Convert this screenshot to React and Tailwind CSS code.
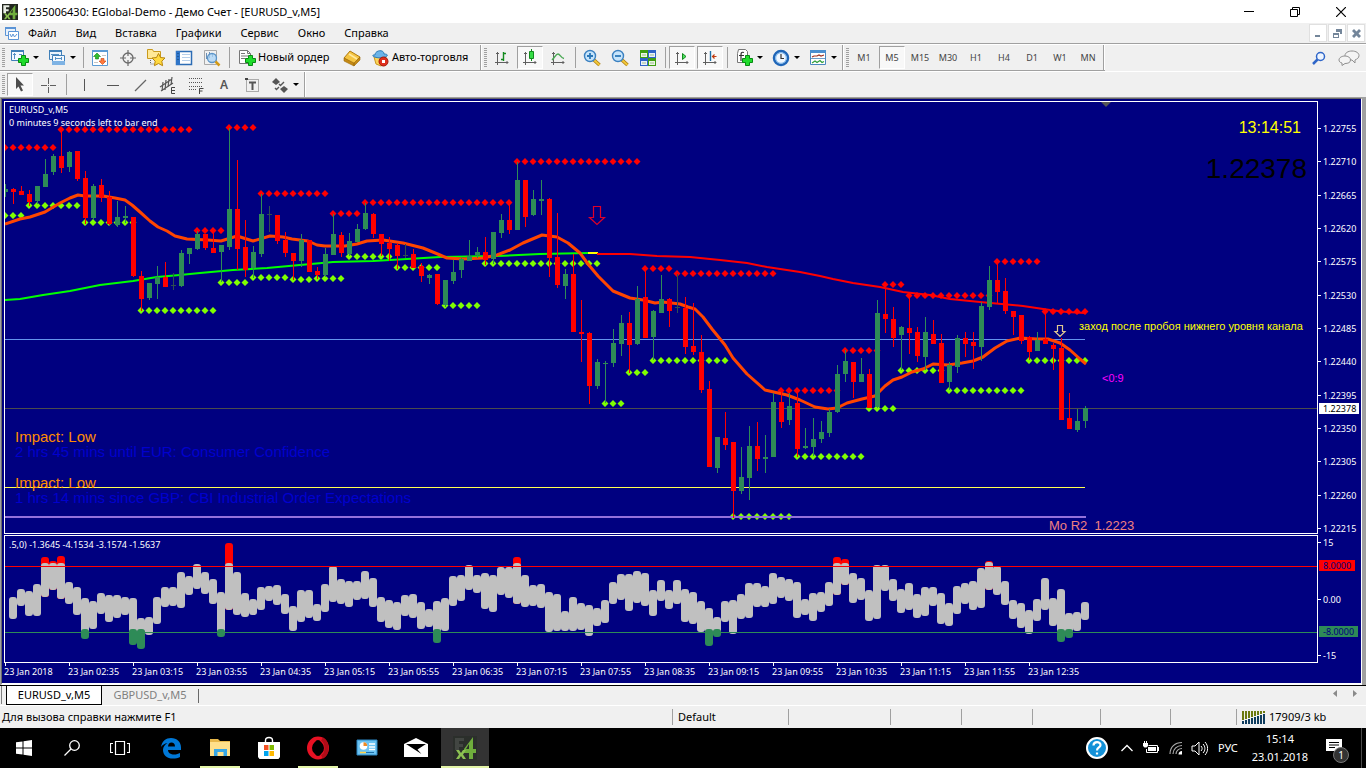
import clsx from 'clsx'

// first bar sits at x = 5, one bar every 8px
const barX = (i) => 5 + i * 8

// [direction, body top, body bottom, high, low]
const candles = [
  ['u', 189, 192, 184, 197], ['d', 189, 192, 188, 204], ['d', 191, 195, 186, 195], ['d', 194, 202, 190, 206],
  ['u', 186, 201, 186, 204], ['u', 174, 187, 159, 187], ['u', 156, 172, 154, 175], ['d', 156, 168, 130, 173],
  ['u', 152, 167, 151, 172], ['d', 151, 179, 151, 181], ['d', 178, 218, 171, 224], ['u', 186, 218, 184, 220],
  ['d', 185, 198, 179, 202], ['d', 197, 224, 191, 225], ['u', 217, 225, 201, 227], ['u', 216, 218, 206, 223],
  ['d', 217, 276, 217, 277], ['d', 276, 299, 271, 311], ['u', 283, 298, 283, 300], ['u', 277, 284, 266, 299],
  ['d', 277, 287, 262, 287], ['n', 285, 286, 273, 290], ['u', 253, 286, 250, 287], ['u', 248, 254, 248, 264],
  ['u', 234, 249, 231, 250], ['d', 234, 248, 234, 250], ['d', 248, 253, 232, 253], ['u', 245, 252, 245, 282],
  ['u', 209, 247, 128, 250], ['d', 209, 249, 160, 270], ['d', 247, 270, 220, 277], ['u', 252, 268, 246, 278],
  ['u', 214, 254, 194, 257], ['n', 214, 215, 206, 232], ['d', 215, 241, 215, 244], ['d', 240, 253, 232, 257],
  ['d', 253, 261, 253, 280], ['u', 240, 261, 234, 267], ['d', 240, 272, 240, 272], ['d', 271, 275, 267, 279],
  ['u', 254, 275, 248, 277], ['u', 234, 255, 214, 255], ['d', 235, 253, 232, 257], ['u', 241, 254, 233, 256],
  ['u', 229, 242, 224, 242], ['u', 213, 229, 203, 230], ['d', 214, 234, 213, 238], ['d', 234, 244, 234, 256],
  ['d', 243, 249, 237, 261], ['d', 245, 256, 243, 269], ['n', 255, 256, 244, 258], ['d', 254, 268, 249, 268],
  ['d', 266, 276, 263, 282], ['u', 275, 278, 274, 284], ['d', 274, 304, 274, 305], ['u', 280, 305, 280, 307],
  ['u', 272, 281, 260, 284], ['u', 259, 270, 258, 278], ['u', 256, 261, 240, 261], ['u', 252, 255, 247, 258],
  ['d', 252, 260, 237, 265], ['u', 232, 259, 232, 264], ['u', 220, 233, 214, 238], ['d', 220, 230, 203, 234],
  ['u', 180, 230, 162, 230], ['d', 180, 217, 180, 227], ['u', 199, 215, 190, 216], ['u', 199, 201, 180, 215],
  ['d', 199, 258, 198, 277], ['d', 257, 285, 213, 288], ['u', 274, 286, 269, 299], ['d', 274, 332, 254, 332],
  ['d', 332, 334, 300, 362], ['d', 333, 386, 332, 404], ['u', 362, 386, 359, 389], ['u', 363, 364, 361, 403],
  ['u', 343, 363, 329, 367], ['u', 323, 344, 315, 356], ['d', 323, 345, 312, 373], ['u', 299, 344, 286, 345],
  ['d', 297, 338, 270, 338], ['u', 311, 337, 310, 360], ['u', 299, 313, 275, 313], ['d', 299, 311, 298, 327],
  ['n', 307, 308, 274, 313], ['d', 308, 347, 297, 354], ['d', 346, 352, 303, 355], ['d', 352, 390, 335, 393],
  ['d', 389, 467, 381, 467], ['u', 437, 468, 437, 473], ['d', 438, 445, 412, 450], ['d', 442, 491, 442, 518],
  ['u', 477, 491, 447, 494], ['u', 446, 478, 426, 500], ['d', 446, 459, 422, 471], ['u', 457, 459, 435, 473],
  ['u', 402, 457, 393, 457], ['d', 402, 422, 390, 428], ['u', 406, 420, 393, 425], ['d', 403, 449, 393, 457],
  ['u', 446, 448, 428, 449], ['u', 439, 447, 418, 456], ['u', 432, 439, 421, 443], ['u', 412, 433, 409, 437],
  ['u', 374, 412, 365, 413], ['u', 361, 374, 350, 382], ['d', 362, 382, 362, 398], ['u', 374, 382, 358, 382],
  ['d', 374, 408, 369, 408], ['u', 313, 407, 300, 408], ['d', 314, 319, 288, 333], ['d', 319, 338, 307, 347],
  ['u', 327, 335, 326, 370], ['d', 328, 333, 295, 354], ['d', 332, 356, 327, 362], ['u', 332, 357, 317, 370],
  ['d', 334, 344, 320, 344], ['d', 343, 383, 334, 383], ['u', 365, 382, 362, 390], ['u', 338, 367, 335, 373],
  ['d', 338, 344, 332, 357], ['d', 342, 346, 332, 369], ['u', 306, 347, 302, 361], ['u', 280, 307, 266, 310],
  ['d', 280, 292, 262, 303], ['d', 291, 311, 278, 314], ['d', 311, 317, 311, 335], ['d', 315, 341, 315, 344],
  ['d', 337, 352, 336, 360], ['u', 340, 351, 332, 351], ['d', 339, 344, 312, 344], ['d', 345, 349, 343, 370],
  ['d', 348, 420, 338, 420], ['d', 418, 429, 393, 429], ['u', 421, 430, 409, 432], ['u', 408, 421, 406, 428],
]

// [y, first bar, last bar]
const resistance = [
  [147, 0, 6], [129, 7, 23], [230, 24, 27], [127, 28, 31], [193, 32, 40], [213, 41, 44], [202, 45, 63], [161, 64, 79],
  [268, 80, 83], [273, 84, 96], [390, 97, 104], [350, 105, 109], [284, 110, 112], [295, 113, 123], [261, 124, 129],
  [311, 130, 135],
]
const support = [
  [215, 0, 2], [205, 3, 9], [222, 10, 16], [310, 17, 26], [282, 27, 30], [277, 31, 35], [279, 36, 38], [278, 39, 42],
  [256, 43, 48], [267, 49, 54], [305, 55, 59], [263, 60, 74], [403, 75, 77], [372, 78, 80], [360, 81, 90],
  [516, 91, 98], [456, 99, 107], [408, 108, 111], [370, 112, 117], [390, 118, 127], [360, 128, 135],
]

const fastMa =
  '5,224 20,219 30,217 45,212 60,203 70,198 78,195 85,196 103,196 115,198 125,200 132,205 140,212 150,221 158,227 167,231 175,236 187,239 208,240 221,241 237,236 253,241 270,236 283,237 292,239 308,241 317,245 325,246 345,246 357,244 367,241 383,240 403,243 423,248 440,255 447,258 463,259 483,258 497,255 510,250 523,243 542,235 557,237 568,243 580,253 588,264 598,276 613,291 630,298 643,300 655,303 663,302 680,304 688,307 695,309 703,317 712,329 725,345 733,358 747,374 765,390 787,395 800,400 815,407 828,409 837,408 847,403 862,399 875,396 885,386 893,380 902,377 912,372 923,369 933,364 948,365 962,363 973,361 983,357 995,348 1007,341 1020,338 1037,339 1048,339 1060,343 1070,350 1080,359 1086,364'
const slowUp =
  '5,300 20,299 43,295 70,291 80,289 100,285 133,281 157,277 180,275 200,273 233,270 267,268 300,265 333,262 373,261 407,259 440,257 497,256 540,254 588,253'
const slowDown =
  '597,254 630,254 657,256 690,257 720,260 747,263 767,267 800,272 820,276 833,279 853,283 880,287 903,292 930,295 950,299 980,302 1023,306 1050,310 1067,312 1085,313'

// oscillator ranges per bar, three steps to a pixel: [top, bottom, peak when outside the levels]
const osc = [
  [201, 266], [177, 227], [183, 257], [163, 257], [99, 202, 81], [99, 181, 93], [99, 208, 77], [155, 223], [171, 256],
  [204, 308, 326], [214, 297], [189, 253], [195, 275], [195, 263], [201, 256], [204, 308, 345], [263, 308, 356],
  [261, 314], [201, 281], [171, 232], [171, 229], [126, 235], [137, 196], [102, 176], [126, 193], [147, 223],
  [186, 308, 320], [99, 239, 39], [126, 256], [189, 260], [207, 256], [171, 241], [168, 214], [166, 226], [192, 253],
  [228, 302], [180, 275], [180, 265], [222, 272], [163, 247], [109, 217], [147, 221], [153, 230], [153, 211],
  [123, 206], [144, 230], [201, 277], [210, 293], [216, 299], [196, 259], [192, 265], [216, 296], [238, 290],
  [213, 308, 339], [205, 302], [138, 227], [135, 212], [105, 180], [135, 188], [129, 236], [135, 246], [111, 194],
  [111, 203], [99, 221, 81], [135, 230], [165, 227], [161, 234], [186, 306], [192, 302], [243, 302], [201, 302],
  [219, 299], [225, 318], [234, 287], [210, 278], [156, 223], [132, 209], [132, 242], [123, 218], [129, 227],
  [180, 257], [150, 212], [180, 236], [150, 223], [177, 277], [186, 281], [213, 306], [234, 308, 348],
  [261, 308, 320], [213, 275], [210, 311], [192, 266], [159, 263], [159, 232], [168, 230], [129, 223], [141, 203],
  [147, 212], [156, 263], [207, 256], [189, 272], [186, 245], [156, 227], [99, 196, 81], [99, 164, 87], [129, 218],
  [144, 209], [180, 272], [105, 266], [105, 182], [147, 212], [177, 248], [159, 239], [192, 263], [171, 257],
  [171, 227], [189, 281], [219, 287], [168, 251], [159, 223], [153, 239], [114, 233], [97, 180, 93], [109, 194],
  [153, 224], [210, 266], [219, 293], [240, 311], [207, 272], [144, 239], [204, 287], [177, 308, 335],
  [249, 308, 323], [246, 302], [215, 270],
]
const oscY = (v) => 530 + Math.round(v / 3)

const prices = [
  '1.22755', '1.22710', '1.22665', '1.22620', '1.22575', '1.22530', '1.22485', '1.22440', '1.22395', '1.22350',
  '1.22305', '1.22260', '1.22215',
]
const times = [
  '2018', '02:35', '03:15', '03:55', '04:35', '05:15', '05:55', '06:35', '07:15', '07:55', '08:35', '09:15', '09:55',
  '10:35', '11:15', '11:55', '12:35',
]
const menus = ['Файл', 'Вид', 'Вставка', 'Графики', 'Сервис', 'Окно', 'Справка']
const frames = ['M1', 'M5', 'M15', 'M30', 'H1', 'H4', 'D1', 'W1', 'MN']

/* ---------- icons ---------- */

function Svg({ size = 18, children, className }) {
  return (
    <svg width={size} height={size} viewBox={`0 0 ${size} ${size}`} fill="none" className={clsx('shrink-0', className)}>
      {children}
    </svg>
  )
}

const Plus = ({ x = 7, y = 6 }) => (
  <path
    transform={`translate(${x} ${y})`}
    d="M3.500.5h4v3h3v4h-3v3h-4v-3h-3v-4h3z"
    fill="#1fdc2b"
    stroke="#078a12"
  />
)

const Mt4Logo = ({ size = 16, dark }) => (
  <svg width={size} height={size} viewBox="0 0 24 24" className="shrink-0">
    <rect width="24" height="24" fill={dark ? '#2b2f2b' : '#22261f'} />
    <path d="M2 2h9v3H6v3h4v3H6v3H2z" fill={dark ? '#424642' : '#e8ece4'} />
    <path d="M20 1v12h3v4h-3v6h-4v-6h-5v-4zM16 8l-3 5h3z" fill="#6fae3c" />
    <path d="M3 14h3l2 3 2-3h3l-3 4.500 3 4.500h-3l-2-3-2 3H3l3-4.500z" fill="#8cc152" />
  </svg>
)

const MdiIcon = () => (
  <Svg size={16}>
    <path d="M1.500 2.500h10v8h-10z" fill="#e9f2fc" stroke="#5b94d6" />
    <path d="M1 2h11v2H1z" fill="#5b94d6" />
    <path d="M4.500 6.500h10v8h-10z" fill="#fff" stroke="#5b94d6" />
    <path d="M6 9l1.500 3L9 9l1.500 3L13 9" stroke="#5b94d6" />
  </Svg>
)

const NewChartIcon = () => (
  <Svg>
    <path d="M.5 1.500h12v10H.5z" fill="#f4f9ff" stroke="#3f7fb8" />
    <path d="M0 1h13v2H0z" fill="#3f7fb8" />
    <path d="M3.500 4v6M2 5.500h3M8 5.500h3" stroke="#5590c4" />
    <Plus />
  </Svg>
)

const ProfilesIcon = () => (
  <Svg>
    <path d="M1.500 1.500h12v9h-12z" fill="#eaf3fc" stroke="#3f7fb8" />
    <path d="M1 1h13v2H1z" fill="#3f7fb8" />
    <path d="M4.500 6.500h12v9h-12z" fill="#f4f9ff" stroke="#3f7fb8" />
    <path d="M4 12h13v4H4z" fill="#7fb3e4" />
    <path d="M3 5.500h8M7 9.500h7M7.500 8v3M13.500 8v3" stroke="#5590c4" />
  </Svg>
)

const MarketIcon = () => (
  <Svg>
    <path d="M1.500 1.500h15v15h-15z" fill="#fff" stroke="#5b9bd5" />
    <path d="M1 1h16v2H1z" fill="#5b9bd5" />
    <path d="M6 4l3.500 3.500H7.500V10h-3V7.500h-2z" fill="#2fbf2f" stroke="#158015" strokeWidth=".6" />
    <path d="M11.500 15.500L8 12h2V9.500h3V12h2z" fill="#ff7a3d" stroke="#c8410d" strokeWidth=".6" />
    <path d="M11 6.500h4M3 13.500h4" stroke="#c5c5c5" />
  </Svg>
)

const TargetIcon = () => (
  <Svg>
    <circle cx="9" cy="9" r="5" stroke="#6b6b6b" strokeWidth="1.300" />
    <path d="M9 1v6M9 11v6M1 9h6M11 9h6" stroke="#6b6b6b" strokeWidth="1.200" />
  </Svg>
)

const FolderStarIcon = () => (
  <Svg size={20}>
    <path d="M1.500 3V1.500h5l1 2h7v7h-13z" fill="#ffe896" stroke="#c99a1c" />
    <path d="M4.500 12v4h3" stroke="#666" strokeDasharray="1 1" />
    <path
      d="M12.500 5.500l2 4 4.500.5-3.200 3.200.8 4.500-4.100-2.200-4.100 2.200.8-4.500L6 10l4.500-.5z"
      fill="#ffd940"
      stroke="#b8860b"
    />
  </Svg>
)

const NotebookIcon = () => (
  <Svg>
    <path d="M1.500 2.500h15v13h-15z" fill="#fff" stroke="#2c6cb4" strokeWidth="1.500" />
    <path d="M1 2h4v14H1z" fill="#2f75c8" />
    <path d="M7 5.500h8M7 8.500h8M7 11.500h8" stroke="#b6cfea" />
    <path d="M3 4v9" stroke="#12406f" strokeDasharray="1 2" />
  </Svg>
)

const TesterIcon = () => (
  <Svg>
    <path d="M1.500 1.500h12v14h-12z" fill="#f1f1f1" stroke="#a9a9a9" />
    <path d="M3.500 4v6M6.500 3v6M9.500 4v4" stroke="#6b8fb5" />
    <circle cx="9" cy="9" r="4.500" fill="#a9d3f5" fillOpacity=".75" stroke="#5b94c8" strokeWidth="1.300" />
    <path d="M12.500 12.500l4 4" stroke="#d49a16" strokeWidth="2.500" />
  </Svg>
)

const OrderIcon = () => (
  <Svg>
    <path d="M1.500 1.500h8l3 3v10h-11z" fill="#fff" stroke="#777" />
    <path d="M9.500 1.500v3h3M3 4.500h4M3 7h7M3 9.500h4" stroke="#777" />
    <Plus />
  </Svg>
)

const GoldIcon = () => (
  <Svg>
    <path d="M1 9l6-7 10 6-6 7z" fill="#f5c542" stroke="#b07a10" />
    <path d="M1 9l10 5v3L1 12zM11 14l6-6v3l-6 6z" fill="#c58a14" stroke="#9a6a0c" strokeWidth=".6" />
    <path d="M6 5l8 5" stroke="#ffe9a0" strokeWidth="1.500" />
  </Svg>
)

const AutoIcon = () => (
  <Svg>
    <path d="M3 8h12l-1 6-4 3-5-2z" fill="#fbd55a" stroke="#c9971f" />
    <path d="M4 6c0-5 9-6 9-1 3 0 4 1 3 2-3 2.500-11 2.500-14 0-1-.8 1-1.300 2-1z" fill="#6cb4e8" stroke="#2f7db8" />
    <circle cx="12.500" cy="12.500" r="4.500" fill="#e0301e" stroke="#a51708" />
    <path d="M11 11h3v3h-3z" fill="#fff" />
  </Svg>
)

const Axes = () => (
  <path d="M4.500 3v13M2 13.500h13M3 5l1.500-1.500L6 5M13.500 12l1.500 1.500-1.500 1.500" stroke="#5f5f5f" strokeWidth="1" />
)

const BarsIcon = () => (
  <Svg>
    <Axes />
    <path d="M10.500 3v9M10.500 4.500h2.500M8 10.500h2.500" stroke="#118a1d" strokeWidth="1.400" />
  </Svg>
)
const CandlesIcon = () => (
  <Svg>
    <Axes />
    <path d="M10.500 0v12" stroke="#118a1d" />
    <path d="M8.500 2.500h4v7h-4z" fill="#35dc45" stroke="#118a1d" />
  </Svg>
)
const LineIcon = () => (
  <Svg>
    <Axes />
    <path d="M3 11c3-3 4-6 6-6s3 4 6 4.500" stroke="#4aa854" strokeWidth="1.400" />
  </Svg>
)
const ScrollIcon = () => (
  <Svg>
    <Axes />
    <path d="M9.500 4.500l3.500 3-3.500 3z" fill="#4fe060" stroke="#118a1d" />
  </Svg>
)
const ShiftIcon = () => (
  <Svg>
    <Axes />
    <path d="M9.500 2v10" stroke="#1e6fa8" strokeWidth="1.400" />
    <path d="M15.500 7.500H11M13.500 5.500l-2 2 2 2" stroke="#c03c10" strokeWidth="1.200" />
  </Svg>
)

const ZoomIcon = ({ plus }) => (
  <Svg>
    <path d="M11 11l5.500 5" stroke="#a87a10" strokeWidth="3.500" />
    <path d="M11 11l5.500 5" stroke="#f2c83a" strokeWidth="2" />
    <circle cx="7" cy="7" r="5.500" fill="#c6e4fb" stroke="#3a80c0" strokeWidth="1.400" />
    <path d={plus ? 'M4 7h6M7 4v6' : 'M4 7h6'} stroke="#2b78b8" strokeWidth="1.800" />
  </Svg>
)

const TileIcon = () => (
  <Svg>
    <path d="M1 1h8v8H1zM9 9h8v8H9z" fill="#3f9e12" />
    <path d="M9 1h8v8H9zM1 9h8v8H1z" fill="#2f63c8" />
    <path d="M2 4h6v4H2zM10 4h6v4h-6zM2 12h6v4H2zM10 12h6v4h-6z" fill="#fff" fillOpacity=".9" />
    <path d="M3 6h4M11 6h4M3 14h4M11 14h4" stroke="#9dbd8d" />
  </Svg>
)

const IndicatorIcon = () => (
  <Svg>
    <path d="M3.500.5h7l2 2v11h-10v-9z" fill="#fff" stroke="#777" />
    <path d="M9 3.500c-3-1-3 1-3 3V12M4 6.500h5" stroke="#333" strokeWidth="1.200" />
    <Plus />
  </Svg>
)

const ClockIcon = () => (
  <Svg>
    <circle cx="9" cy="9" r="7" fill="#f0f7ff" stroke="#1f66b8" strokeWidth="2.500" />
    <circle cx="9" cy="9" r="5.300" stroke="#7fb9ee" />
    <path d="M9 5v4.500h3" stroke="#333" strokeWidth="1.200" />
  </Svg>
)

const TemplateIcon = () => (
  <Svg>
    <path d="M1.500 1.500h15v14h-15z" fill="#fff" stroke="#4a86bf" />
    <path d="M1 1h16v3H1z" fill="#4a8fd0" />
    <path d="M3 8l2-1h3l2-1 2 1 3-1" stroke="#a03020" strokeWidth="1.200" />
    <path d="M2 9.500h14" stroke="#6f9dc8" />
    <path d="M3 14l3-2 2 1.500 3-2 2 2 2-1" stroke="#2f9e3a" strokeWidth="1.200" />
  </Svg>
)

const CursorIcon = () => (
  <Svg>
    <path d="M5 1l8 8.500H9.500l2.500 5-2 1-2.500-5L5 13z" fill="#4d4d4d" />
  </Svg>
)
const CrossIcon = () => (
  <Svg>
    <path d="M9.500 2v6M9.500 11v6M2 9.500h6M11 9.500h6M9 9.500h1" stroke="#5f5f5f" />
  </Svg>
)
const VLineIcon = () => (
  <Svg>
    <path d="M9.500 3v12" stroke="#555" />
  </Svg>
)
const HLineIcon = () => (
  <Svg>
    <path d="M4 9.500h12" stroke="#555" />
  </Svg>
)
const TrendIcon = () => (
  <Svg>
    <path d="M4 15L15 4" stroke="#666" strokeWidth="1.200" />
  </Svg>
)
const ChannelIcon = () => (
  <Svg>
    <path d="M1 11L13 3M2 15L14 7M4 6l-1 9M7 4L6 14M10 3L9 11M13 1l-1 8" stroke="#555" strokeWidth="1.200" />
    <path d="M16 11.500h-3.500v6H16M12.500 14.500H16" stroke="#444" />
  </Svg>
)
const FiboIcon = () => (
  <Svg>
    <path d="M2 2.500h14M2 6.500h14M2 10.500h14M2 13.500h8" stroke="#555" strokeDasharray="1 1" />
    <path d="M16.500 12.500h-4V18M12.500 15h3" stroke="#444" />
  </Svg>
)
const LabelIcon = () => (
  <Svg>
    <path d="M3.500 3.500h12v12h-12z" stroke="#666" strokeDasharray="1 1" />
    <path d="M2 2h3v2H2z" fill="#444" />
    <path d="M6 6.500h7M9.500 6v8" stroke="#555" strokeWidth="2" />
  </Svg>
)
const ArrowsIcon = () => (
  <Svg>
    <path d="M5 2l4 4-4 3-4-3zM13 10l4 3-4 4-4-4z" fill="#555" />
    <path d="M4 12l1.500 1.500L8 11M8 8l1.500 1.500L13 6" stroke="#555" strokeWidth="1.400" />
  </Svg>
)

/* ---------- toolbars ---------- */

const Caret = () => <span className="border-x-[3px] border-t-[3px] border-x-transparent border-t-black" />

const Grip = () => (
  <span className="flex w-1.5 shrink-0 items-center justify-center">
    <svg width="3" height="20" className="text-[#a0a0a0]">
      <path d="M1.500 0v20" stroke="currentColor" strokeWidth="3" strokeDasharray="1 1" />
    </svg>
  </span>
)

const Sep = ({ wide }) => (
  <span className={clsx('flex shrink-0 justify-center py-0.5', wide ? 'w-2' : 'w-1.5')}>
    <span className="w-px bg-[#a0a0a0]" />
  </span>
)

const Group = ({ children }) => (
  <div className="flex border-r border-r-[#a0a0a0] pr-px shadow-[1px_0_0_#fff] mr-px">{children}</div>
)

function Tool({ label, pressed, drop, children }) {
  return (
    <button
      aria-label={label}
      aria-pressed={pressed}
      className={clsx(
        'flex shrink-0 items-center justify-center text-[9px] text-[#444]',
        drop ? 'w-[37px] gap-1' : 'w-7',
        pressed &&
          'mx-px my-px w-[26px] border border-b-white border-l-[#a0a0a0] border-r-white border-t-[#a0a0a0] bg-[#f8f8f8]'
      )}
    >
      {children}
      {drop && <Caret />}
    </button>
  )
}

function TitleBar() {
  return (
    <header className="flex h-[23px] items-center bg-white px-0.5">
      <Mt4Logo />
      <h1 className="ml-[5px] flex-1 text-[11px] leading-4 text-black">
        1235006430: EGlobal-Demo - Демо Счет - [EURUSD_v,M5]
      </h1>
      <button aria-label="Свернуть" className="flex w-[46px] justify-center">
        <Svg size={10}>
          <path d="M0 4.500h10" stroke="#000" />
        </Svg>
      </button>
      <button aria-label="Восстановить" className="flex w-[46px] justify-center">
        <Svg size={10}>
          <path d="M.5 2.500h7v7h-7zM2.500 2V.5h7v7H8" stroke="#000" />
        </Svg>
      </button>
      <button aria-label="Закрыть" className="flex w-[46px] justify-center">
        <Svg size={10}>
          <path d="M0 0l10 10M10 0L0 10" stroke="#000" strokeWidth="1.200" />
        </Svg>
      </button>
    </header>
  )
}

function MenuBar() {
  return (
    <nav className="flex h-[21px] items-center border-b border-[#a0a0a0] pl-1">
      <MdiIcon />
      <div className="ml-2 flex flex-1 gap-[19px]">
        {menus.map((m) => (
          <button key={m} className="text-[11px] leading-4 text-black">
            {m}
          </button>
        ))}
      </div>
      <div className="flex gap-px pr-px">
        {['M3 8h5v2H3z', 'M5 2h6v5H9V5H5zM2 6h6v5H2zM3 8h4v2H3z', 'M2 4l2-2 2.500 2.500L9 2l2 2-2.500 2.500L11 9l-2 2-2.500-2.500L4 11 2 9l2.500-2.500z'].map(
          (d, i) => (
            <button
              key={d}
              aria-label={['Свернуть окно', 'Восстановить окно', 'Закрыть окно'][i]}
              className="flex size-[18px] items-center justify-center border border-[#e0e0e0] bg-white"
            >
              <Svg size={13}>
                <path d={d} fill="#74869a" fillRule="evenodd" />
              </Svg>
            </button>
          )
        )}
      </div>
    </nav>
  )
}

function MainToolbar() {
  return (
    <div className="flex h-[27px] border-t border-white">
      <div className="flex border-b border-[#a0a0a0]">
        <Group>
          <Grip />
          <Tool label="Новый график" drop><NewChartIcon /></Tool>
          <Tool label="Профили" drop><ProfilesIcon /></Tool>
          <Sep />
          <Tool label="Обзор рынка"><MarketIcon /></Tool>
          <Tool label="Окно данных"><TargetIcon /></Tool>
          <Tool label="Навигатор"><FolderStarIcon /></Tool>
          <Tool label="Терминал"><NotebookIcon /></Tool>
          <Tool label="Тестер стратегий"><TesterIcon /></Tool>
          <Sep />
          <button className="flex w-[106px] items-center gap-0.5 pl-1.5 text-[11px] text-black">
            <OrderIcon />
            Новый ордер
          </button>
          <Tool label="MetaEditor"><GoldIcon /></Tool>
          <button className="flex w-[113px] items-center gap-[3px] pl-[5px] text-[11px] text-black">
            <AutoIcon />
            Авто-торговля
          </button>
        </Group>
        <Group>
          <Grip />
          <Tool label="Бары"><BarsIcon /></Tool>
          <Tool label="Японские свечи" pressed><CandlesIcon /></Tool>
          <Tool label="Линия"><LineIcon /></Tool>
          <Sep />
          <Tool label="Увеличить"><ZoomIcon plus /></Tool>
          <Tool label="Уменьшить"><ZoomIcon /></Tool>
          <Tool label="Окна рядом"><TileIcon /></Tool>
          <Sep />
          <Tool label="Автопрокрутка" pressed><ScrollIcon /></Tool>
          <Tool label="Сдвиг графика" pressed><ShiftIcon /></Tool>
          <Sep />
          <Tool label="Индикаторы" drop><IndicatorIcon /></Tool>
          <Tool label="Периоды" drop><ClockIcon /></Tool>
          <Tool label="Шаблоны" drop><TemplateIcon /></Tool>
        </Group>
        <Group>
          <Grip />
          {frames.map((f) => (
            <Tool key={f} label={f} pressed={f === 'M5'}>{f}</Tool>
          ))}
        </Group>
      </div>
      <div className="ml-auto flex items-center gap-3 pr-1.5">
        <button aria-label="Поиск">
          <Svg size={14}>
            <circle cx="8.500" cy="5.500" r="4" fill="#eef5ff" stroke="#2f66c8" strokeWidth="1.500" />
            <path d="M5.500 8.500L1 13" stroke="#2f66c8" strokeWidth="2.500" />
          </Svg>
        </button>
        <button aria-label="Чат">
          <svg width="22" height="16" viewBox="0 0 22 16" fill="#f4f4f4" stroke="#8f8f8f">
            <path d="M14 1c4 0 7 2 7 4.500S19 9 17 10v3l-3-3c-4 0-7-2-7-4.500S10 1 14 1z" />
            <path d="M7 6c3 0 5.500 1.500 5.500 4S10 13.500 7 13.500l-3 2V13C2 12.500 1 11.500 1 10c0-2.500 3-4 6-4z" />
          </svg>
        </button>
      </div>
    </div>
  )
}

function DrawToolbar() {
  return (
    <div className="flex h-[27px] border-b border-t border-b-[#a0a0a0] border-t-white">
      <Group>
        <Grip />
        <Tool label="Курсор" pressed><CursorIcon /></Tool>
        <Tool label="Перекрестие"><CrossIcon /></Tool>
        <Sep wide />
        <Tool label="Вертикальная линия"><VLineIcon /></Tool>
        <Tool label="Горизонтальная линия"><HLineIcon /></Tool>
        <Tool label="Трендовая линия"><TrendIcon /></Tool>
        <Tool label="Канал"><ChannelIcon /></Tool>
        <Tool label="Фибоначчи"><FiboIcon /></Tool>
        <Tool label="Текст">
          <span className="text-[12px] font-semibold text-[#555]">A</span>
        </Tool>
        <Tool label="Метка"><LabelIcon /></Tool>
        <Tool label="Стрелки" drop><ArrowsIcon /></Tool>
      </Group>
    </div>
  )
}

/* ---------- chart ---------- */

const dot = (i, y) => `M${barX(i) - 3.5} ${y + 0.5}l3.5-3.5 3.5 3.5-3.5 3.5z`

function Dots({ rows, className }) {
  const d = rows
    .map(([y, from, to]) => Array.from({ length: to - from + 1 }, (_, n) => dot(from + n, y)).join(''))
    .join('')
  return <path d={d} className={className} />
}

const candleColor = { u: 'fill-[#2e8b57]', d: 'fill-[#ff0000]', n: 'fill-[#2f4f4f]' }

function PriceChart() {
  return (
    <svg width="1312" height="431" viewBox="5 102 1312 431" fill="none" className="block">
      <path d="M1101 102h10l-5 5z" fill="#555" />
      <g shapeRendering="crispEdges">
        <rect x="5" y="339" width="1080" height="1" fill="#6495ed" />
        <rect x="5" y="408" width="1312" height="1" fill="#4c4c4c" />
        <rect x="5" y="487" width="1080" height="1" fill="#ffff50" />
      </g>
      <Dots rows={resistance} className="fill-[#ff0000]" />
      <Dots rows={support} className="fill-[#7fff00]" />
      <rect x="5" y="516" width="1081" height="2" fill="#9370db" />
      <polyline points={slowUp} stroke="#00ff00" strokeWidth="2" />
      <rect x="588" y="252" width="10" height="2" fill="#ffff00" />
      <polyline points={slowDown} stroke="#ff0000" strokeWidth="2" />
      <polyline points={fastMa} stroke="#ff4500" strokeWidth="3" strokeLinejoin="round" />
      <g shapeRendering="crispEdges">
        {candles.map(([dir, top, bottom, high, low], i) => (
          <path
            key={i}
            d={`M${barX(i)} ${high}h1V${low}h-1zM${barX(i) - 2} ${top}h5V${bottom}h-5z`}
            className={candleColor[dir]}
          />
        ))}
      </g>
      <path d="M593.500 206.500h7v11h4l-7.500 7-7.500-7h4z" stroke="#e00028" strokeWidth="1.200" />
      <path d="M1057.500 325.500h5v6h2.500l-5 5-5-5h2.500z" stroke="#e0c890" strokeWidth="1.200" />
    </svg>
  )
}

function Oscillator() {
  return (
    <svg width="1312" height="126" viewBox="5 536 1312 126" className="block">
      {osc.map(([top, bottom, peak], i) => {
        const x = barX(i + 1) - 4
        return (
          <g key={i}>
            {peak < top && (
              <rect x={x} y={oscY(peak)} width="8" height={oscY(bottom) - oscY(peak)} rx="3" fill="#ff0000" />
            )}
            <rect x={x} y={oscY(top)} width="8" height={oscY(bottom) - oscY(top)} rx="3" fill="#c0c0c0" />
            {peak > bottom && (
              <rect x={x} y={oscY(296)} width="8" height={oscY(peak) - oscY(296)} rx="3" fill="#2e8b57" />
            )}
          </g>
        )
      })}
      <g shapeRendering="crispEdges">
        <rect x="5" y="566" width="1312" height="1" fill="#ff0000" />
        <rect x="5" y="632" width="1312" height="1" fill="#2e8b57" />
      </g>
    </svg>
  )
}

const AxisLabel = ({ children }) => (
  <li className="flex items-center leading-[11px]">
    <span className="mr-0.5 h-px w-[3px] bg-white" />
    {children}
  </li>
)

function ChartWindow() {
  return (
    <main className="bg-[#a0a0a0] pl-px pr-1">
      <div className="grid grid-cols-[minmax(0,1fr)_43px] border-b-2 border-l border-r border-t border-[#696969] border-b-white border-r-white bg-[#000080] pl-0.5 pt-0.5 text-[9px] text-white">
        <section className="relative overflow-hidden border border-white font-['Liberation_Sans',sans-serif]">
          <PriceChart />
          <div className="absolute left-1 top-px font-['Noto_Sans',sans-serif] leading-[13px]">
            <p>EURUSD_v,M5</p>
            <p>0 minutes 9 seconds left to bar end</p>
          </div>
          <div className="absolute right-4 top-4 text-base leading-[20px] text-[#ffff00]">13:14:51</div>
          <div className="absolute right-2.5 top-[51px] text-[28px] leading-8 text-black">1.22378</div>
          <div className="absolute left-[1074px] top-[218px] whitespace-nowrap text-[11px] leading-3 text-[#ffff00]">
            заход после пробоя нижнего уровня канала
          </div>
          <div className="absolute left-[1097px] top-[270px] text-[11px] leading-3 text-[#ff00ff]">&lt;0:9</div>
          <div className="absolute left-[1044px] top-[416px] whitespace-pre text-[13px] leading-4 text-[#f08080]">
            Mo R2{'  '}1.2223
          </div>
          <div className="absolute left-2.5 top-[327px] text-[15px] leading-[15px] text-[#0000cd]">
            <p className="text-[#ff8c00]">Impact: Low</p>
            <p>2 hrs 45 mins until EUR: Consumer Confidence</p>
            <p className="mt-4 text-[#ff8c00]">Impact: Low</p>
            <p>1 hrs 14 mins since GBP: CBI Industrial Order Expectations</p>
          </div>
        </section>
        <div className="relative pt-[22px]">
          <ul className="flex h-[411px] flex-col justify-between">
            {prices.map((p) => (
              <AxisLabel key={p}>{p}</AxisLabel>
            ))}
          </ul>
          <span className="absolute left-px top-[302px] w-10 bg-white pl-1 leading-[11px] text-black">1.22378</span>
        </div>
        <section className="relative mt-px overflow-hidden border border-white">
          <Oscillator />
          <p className="absolute left-1 top-0.5 leading-[13px]">.5,0) -1.3645 -4.1534 -3.1574 -1.5637</p>
        </section>
        <div className="relative mt-px">
          <ul className="flex h-32 flex-col justify-between py-0.5">
            <AxisLabel>15</AxisLabel>
            <AxisLabel>0.00</AxisLabel>
            <AxisLabel>-15</AxisLabel>
          </ul>
          <span className="absolute left-px top-[25px] w-9 bg-[#ff0000] pl-1 leading-[11px] text-[#000080]">8.0000</span>
          <span className="absolute left-px top-[91px] w-[39px] bg-[#2e8b57] pl-1 leading-[11px] text-[#000080]">
            -8.0000
          </span>
        </div>
        <ul className="flex h-5 overflow-hidden">
          {times.map((t) => (
            <li
              key={t}
              className="relative w-16 shrink-0 whitespace-nowrap pt-0.5 leading-[13px] before:absolute before:left-px before:top-0 before:h-[3px] before:w-px before:bg-white"
            >
              23 Jan {t}
            </li>
          ))}
        </ul>
      </div>
    </main>
  )
}

function ChartTabs() {
  return (
    <div className="flex h-[21px] items-start border-b border-t border-b-white border-t-black pl-px text-[11px]">
      <span className="mr-1 h-[18px] w-px bg-[#808080]" />
      <button className="h-[19px] w-24 border border-t-0 border-black bg-white leading-4 text-black">EURUSD_v,M5</button>
      <button className="h-[18px] w-24 leading-4 text-[#808080]">GBPUSD_v,M5</button>
      <span className="mt-[3px] h-3.5 w-px bg-[#696969]" />
      <div className="ml-auto flex gap-3 pr-2 pt-1 text-[#8a8a8a]">
        <button aria-label="Назад">
          <svg width="7" height="7" className="block">
            <path d="M5 0v7L1 3.500z" fill="currentColor" />
          </svg>
        </button>
        <button aria-label="Вперед">
          <svg width="7" height="7" className="block">
            <path d="M2 0v7l4-3.500z" fill="currentColor" />
          </svg>
        </button>
      </div>
    </div>
  )
}

function StatusBar() {
  const cell = 'my-[3px] shrink-0 border-l border-[#a0a0a0]'
  return (
    <footer className="flex h-[22px] items-stretch text-[11px] leading-4 text-black">
      <p className="my-[3px] flex-1 pl-0.5">Для вызова справки нажмите F1</p>
      <p className={clsx(cell, 'w-[116px] pl-[5px]')}>Default</p>
      <span className={clsx(cell, 'w-[102px]')} />
      <span className={clsx(cell, 'w-[71px]')} />
      <span className={clsx(cell, 'w-[71px]')} />
      <span className={clsx(cell, 'w-[68px]')} />
      <span className={clsx(cell, 'w-[70px]')} />
      <span className={clsx(cell, 'w-[66px]')} />
      <p className={clsx(cell, 'flex w-[130px] items-center gap-1 pl-[5px]')}>
        <svg width="23" height="13" shapeRendering="crispEdges">
          {Array.from({ length: 8 }, (_, i) => (
            <g key={i}>
              <rect x={i * 3} y="0" width="2" height={9 - i} fill="#6b7a10" />
              <rect x={i * 3} y={10 - i} width="2" height={3 + i} fill="#0e3c5e" />
            </g>
          ))}
        </svg>
        17909/3 kb
      </p>
    </footer>
  )
}

/* ---------- taskbar ---------- */

function TaskButton({ label, open, active, children }) {
  return (
    <button
      aria-label={label}
      className={clsx('relative flex h-10 w-12 shrink-0 items-center justify-center', active && 'bg-[#333]')}
    >
      {children}
      {(open || active) && (
        <span className={clsx('absolute bottom-0 h-0.5 bg-[#e4f5a8]', active ? 'inset-x-0' : 'inset-x-1')} />
      )}
    </button>
  )
}

function Taskbar() {
  return (
    <footer className="flex h-10 items-center bg-black text-[11px] text-white">
      <TaskButton label="Пуск">
        <Svg size={16}>
          <path d="M0 2.300L6.500 1.400v6.100H0zM7.500 1.300L16 0v7.500H7.500zM0 8.500h6.500v6.100L0 13.700zM7.500 8.500H16V16l-8.500-1.200z" fill="#fff" />
        </Svg>
      </TaskButton>
      <TaskButton label="Поиск">
        <Svg size={16}>
          <circle cx="10.500" cy="5.500" r="4.800" stroke="#fff" strokeWidth="1.300" />
          <path d="M7 9L.5 15.500" stroke="#fff" strokeWidth="1.300" />
        </Svg>
      </TaskButton>
      <TaskButton label="Представление задач">
        <Svg size={20}>
          <path d="M5.500 3.500h9v13h-9zM3 5.500H.5v9H3M17 5.500h2.500v9H17" stroke="#fff" strokeWidth="1.200" />
        </Svg>
      </TaskButton>
      <div className="ml-[3px] flex flex-1 gap-px">
        <TaskButton label="Edge">
          <Svg size={22}>
            <path
              d="M1 10C2 4 6 1 11 1c6 0 10 4 10 9.500V13H8c0 3 3 4.500 6 4.500 2.500 0 4.500-.7 6-1.500v4c-2 1-4.500 1.600-7 1.600C7 21.600 3 18 3 13c0-3 2-5.500 4.500-7C4.500 6.500 2.500 8 1 10zm7-.5h7C15 7 13.500 5.500 11.500 5.500S8.300 7 8 9.500z"
              fill="#0078d7"
              fillRule="evenodd"
            />
          </Svg>
        </TaskButton>
        <TaskButton label="Проводник" open>
          <Svg size={22}>
            <path d="M1 2h8l2 2h10v15H1z" fill="#e8b84a" />
            <path d="M1 5h20v14H1z" fill="#ffe08a" />
            <path d="M5 19v-7h13v7h-3.500v-4h-6v4z" fill="#37a7e5" />
          </Svg>
        </TaskButton>
        <TaskButton label="Магазин">
          <Svg size={24}>
            <path d="M8.500 7V4.500c0-4 7-4 7 0V7" stroke="#fff" strokeWidth="1.400" />
            <path d="M1 6h22v15l-1.500 2h-19L1 21z" fill="#fff" />
            <path d="M7 9h4.500v5H7z" fill="#f25022" />
            <path d="M12.500 9H17v5h-4.500z" fill="#7fba00" />
            <path d="M7 15h4.500v5H7z" fill="#00a4ef" />
            <path d="M12.500 15H17v5h-4.500z" fill="#ffb900" />
          </Svg>
        </TaskButton>
        <TaskButton label="Opera" open>
          <Svg size={24}>
            <ellipse cx="12" cy="12" rx="8.500" ry="9" stroke="#e81123" strokeWidth="5" />
            <path d="M16 3c6 3 6 15 0 18" stroke="#b00c18" strokeWidth="4" />
            <ellipse cx="12" cy="12" rx="4.500" ry="8" fill="#000" />
          </Svg>
        </TaskButton>
        <TaskButton label="Панель управления">
          <Svg size={22}>
            <path d="M1 3h20v15H1z" fill="#6cc3f2" stroke="#2b87c4" />
            <circle cx="7.500" cy="9" r="3.800" fill="#fff" />
            <path d="M7.500 9V5.200A3.800 3.800 0 0 1 11.300 9z" fill="#f08a24" />
            <path d="M13 7h6M13 10h6M13 12.500h6" stroke="#fff" strokeWidth="1.500" />
            <path d="M4 15.500h14" stroke="#1f6fa8" />
            <path d="M4 15.500h6" stroke="#ffd24a" strokeWidth="1.500" />
          </Svg>
        </TaskButton>
        <TaskButton label="Почта">
          <Svg size={24}>
            <path d="M0 8l12-6 12 6v13H0z" fill="#fff" />
            <path d="M2 8h20l-8.500 5.500 4 4.500L2 8z" fill="#000" />
          </Svg>
        </TaskButton>
        <TaskButton label="MetaTrader 4" active>
          <Mt4Logo size={24} dark />
        </TaskButton>
      </div>
      <button aria-label="Справка" className="mr-3">
        <Svg size={24}>
          <circle cx="12" cy="12" r="10" fill="#1391d8" stroke="#fff" strokeWidth="2" />
          <path d="M8.500 9.500c0-4.500 7-4.500 7-.5 0 2.500-3.500 2.500-3.500 5.500M12 16.500v2" stroke="#fff" strokeWidth="2.200" />
        </Svg>
      </button>
      <button aria-label="Скрытые значки" className="mr-2.5">
        <Svg size={12}>
          <path d="M.5 9L6 3.500 11.500 9" stroke="#fff" strokeWidth="1.300" />
        </Svg>
      </button>
      <button aria-label="Батарея" className="mr-2.5">
        <Svg size={16}>
          <path d="M5.500 5.500h9v7H3.500V9" stroke="#fff" />
          <path d="M5 7h8v4H5z" fill="#fff" />
          <path d="M15 7h1v4h-1zM0 3h5v3L3.500 7.500h-2L0 6zM1 1h1v2H1zM3 1h1v2H3z" fill="#fff" />
        </Svg>
      </button>
      <button aria-label="Сеть" className="mr-2">
        <Svg size={14}>
          <path d="M1 13C1 6 6 1.500 13 1.500M4 13c0-5 4-8.500 9-8.500M7 13c0-3 2.500-5.500 6-5.500" stroke="#aaa" strokeWidth="1.200" />
          <path d="M9.500 13.500c0-2 1.500-3.500 3.500-3.500v3.500z" fill="#fff" />
        </Svg>
      </button>
      <button aria-label="Громкость" className="mr-2.5">
        <Svg size={17}>
          <path d="M1 6h3l4-4v13l-4-4H1z" stroke="#fff" />
          <path d="M10 6c1.500 1.500 1.500 3.500 0 5M12 4c2.500 2.500 2.500 6.500 0 9M14 2c3.500 4 3.500 9 0 13" stroke="#fff" />
        </Svg>
      </button>
      <button className="mr-3.5">РУС</button>
      <div className="mr-[17px] text-center leading-[18px]">
        <p>15:14</p>
        <p>23.01.2018</p>
      </div>
      <button aria-label="Уведомления" className="relative mr-[18px] pb-1">
        <Svg size={18}>
          <path d="M1 2h16v12h-5v3l-3-3H1z" fill="#fff" />
          <path d="M4 5.500h10M4 8h10M4 10.500h6" stroke="#000" />
        </Svg>
        <span className="absolute -right-1.5 -bottom-1 flex size-4 items-center justify-center rounded-full border border-[#777] bg-[#333] text-[10px] leading-none">
          1
        </span>
      </button>
      <span className="mr-1 h-10 w-px bg-[#4a4a4a]" />
    </footer>
  )
}

export default function App() {
  return (
    <div className="min-h-screen bg-[#f0f0f0] font-['Noto_Sans',sans-serif]">
      <TitleBar />
      <MenuBar />
      <MainToolbar />
      <DrawToolbar />
      <ChartWindow />
      <ChartTabs />
      <StatusBar />
      <Taskbar />
    </div>
  )
}
